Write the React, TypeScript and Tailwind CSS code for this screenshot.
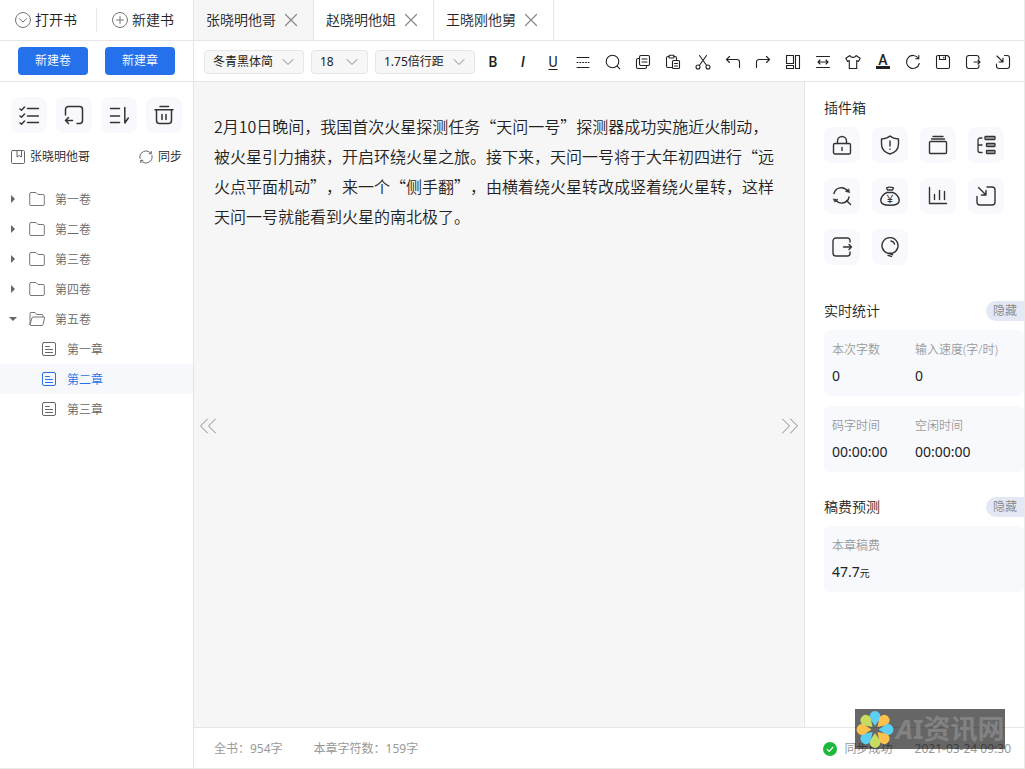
import type { ReactNode } from "react";
import clsx from "clsx";

type IconProps = { size?: number; stroke?: number; className?: string; children: ReactNode };

function Icon({ size = 16, stroke = 1.1, className, children }: IconProps) {
  return (
    <svg
      width={size}
      height={size}
      viewBox={`0 0 ${size} ${size}`}
      fill="none"
      stroke="currentColor"
      strokeWidth={stroke}
      strokeLinecap="round"
      strokeLinejoin="round"
      className={clsx("shrink-0", className)}
      aria-hidden="true"
    >
      {children}
    </svg>
  );
}

const TABS = ["张晓明他哥", "赵晓明他姐", "王晓刚他舅"];

const SELECTS = [
  { label: "字体", value: "冬青黑体简", width: "w-[100px]" },
  { label: "字号", value: "18", width: "w-[57px]" },
  { label: "行距", value: "1.75倍行距", width: "w-[100px]" },
];

const TOOLS: { label: string; icon: ReactNode }[] = [
  { label: "加粗", icon: <span className="font-[Roboto,sans-serif] text-sm font-medium">B</span> },
  { label: "斜体", icon: <span className="font-[Roboto,sans-serif] text-sm font-medium italic">I</span> },
  { label: "下划线", icon: <span className="font-[Roboto,sans-serif] text-sm font-normal underline underline-offset-2">U</span> },
  { label: "分隔线", icon: <Icon><path d="M2 3.5h12M2 13.5h12" /><path d="M2 8.5h12" strokeDasharray="1 1.8" /></Icon> },
  { label: "查找", icon: <Icon><circle cx="7.5" cy="7.5" r="6.3" /><path d="M12.2 12.2l2.6 2.6" /></Icon> },
  {
    label: "复制",
    icon: <Icon><rect x="4.5" y="1.5" width="10" height="10" rx="1.5" /><path d="M4.5 4.5H3A1.5 1.5 0 0 0 1.5 6v7A1.5 1.5 0 0 0 3 14.5h7a1.5 1.5 0 0 0 1.5-1.5v-1.5M7 5h5M7 8h5" /></Icon>,
  },
  {
    label: "粘贴",
    icon: <Icon><path d="M4 2.5H3A1.5 1.5 0 0 0 1.5 4v8A1.5 1.5 0 0 0 3 13.5h4.5M9 2.5h1A1.5 1.5 0 0 1 11.5 4v2.5" /><rect x="4" y="1.2" width="5" height="2.8" rx=".8" /><rect x="7.5" y="6.5" width="7" height="8" rx="1" /><path d="M9.5 9.5h3M9.5 12h3" /></Icon>,
  },
  {
    label: "剪切",
    icon: <Icon><circle cx="3" cy="13" r="2" /><circle cx="13" cy="13" r="2" /><path d="M4.5 1.5l7.2 10M11.5 1.5l-7.2 10" /></Icon>,
  },
  { label: "撤销", icon: <Icon><path d="M4.5 2.5l-3 3 3 3M1.5 5.5H12A2.5 2.5 0 0 1 14.5 8v5.5" /></Icon> },
  { label: "重做", icon: <Icon><path d="M11.5 2.5l3 3-3 3M14.5 5.5H4A2.5 2.5 0 0 0 1.5 8v5.5" /></Icon> },
  {
    label: "排版",
    icon: <Icon><rect x="1.5" y="1.5" width="7" height="8" /><rect x="1.5" y="11.5" width="7" height="3" /><rect x="10.5" y="1.5" width="4" height="13" /></Icon>,
  },
  { label: "页宽", icon: <Icon><path d="M1.5 2.5h13M1.5 13.5h13M3 8h10M5 6L3 8l2 2M11 6l2 2-2 2" /></Icon> },
  {
    label: "皮肤",
    icon: <Icon><path d="M5 1.5L.8 4.2l1.8 3.3 1.7-.9v7.9h7.4V6.6l1.7.9 1.8-3.3L11 1.5C10.5 4 5.5 4 5 1.5z" /></Icon>,
  },
  {
    label: "字体颜色",
    icon: (
      <span className="flex h-[15px] w-[14px] items-center justify-center border-b-3 border-[#222] font-[Roboto,sans-serif] text-sm leading-3 font-medium">A</span>
    ),
  },
  { label: "刷新", icon: <Icon><path d="M14.3 9.5a6.5 6.5 0 1 1-.9-5.2M13.8 1.5v3.2h-3.2" /></Icon> },
  {
    label: "保存",
    icon: <Icon><path d="M3 1.5h9.5l2 2V13a1.5 1.5 0 0 1-1.5 1.5H3A1.5 1.5 0 0 1 1.5 13V3A1.5 1.5 0 0 1 3 1.5zM4.5 1.5v4h6v-4M8.8 3v1" /></Icon>,
  },
  {
    label: "导出",
    icon: <Icon><path d="M14 5V4a2.5 2.5 0 0 0-2.5-2.5H4A2.5 2.5 0 0 0 1.5 4v8A2.5 2.5 0 0 0 4 14.5h7.5A2.5 2.5 0 0 0 14 12v-1M9 8h6M13 6l2 2-2 2" /></Icon>,
  },
  {
    label: "导入",
    icon: <Icon><path d="M9.5 1.5H12A2.5 2.5 0 0 1 14.5 4v8a2.5 2.5 0 0 1-2.5 2.5H4A2.5 2.5 0 0 1 1.5 12v-2M2 2l6 6M8 4v4H4" /></Icon>,
  },
];

const BOOK_ACTIONS: { label: string; icon: ReactNode }[] = [
  {
    label: "批量选择",
    icon: <Icon size={20} stroke={1.5}><path d="M8.5 3.5h11M8.5 11h11M8.5 17.5h11M1 4l1.5 1.2L5.5 2M1 11l1.5 1.2L5.5 9M1 18l1.5 1.2L5.5 16" /></Icon>,
  },
  {
    label: "移动",
    icon: <Icon size={20} stroke={1.5}><path d="M1.5 10V4.5a3 3 0 0 1 3-3h11a3 3 0 0 1 3 3v11a3 3 0 0 1-3 3H13M8.5 15.5h-7M4.5 12.5l-3 3 3 3" /></Icon>,
  },
  {
    label: "排序",
    icon: <Icon size={20} stroke={1.5}><path d="M1.5 3.5h9M1.5 11h9M1.5 17.5h9M15.8 2.5V18l3.5-5" /></Icon>,
  },
  {
    label: "回收站",
    icon: <Icon size={20} stroke={1.5}><path d="M6 1.5h8.5M1 4.8h18M2.5 5v10.5a3 3 0 0 0 3 3h9a3 3 0 0 0 3-3V5M8 9.5v5M12 9.5v5" /></Icon>,
  },
];

const PLUGINS: { label: string; icon: ReactNode }[] = [
  {
    label: "锁定",
    icon: <Icon size={20} stroke={1.4}><rect x="1.5" y="8.5" width="17" height="10.5" rx="1.5" /><path d="M5.5 8.5V6a4.5 4.5 0 0 1 9 0v2.5M10 12.5v3" /></Icon>,
  },
  {
    label: "敏感词",
    icon: <Icon size={20} stroke={1.4}><path d="M10 1c2 1.8 5 2.8 8.5 3v5c0 5-3.5 8.5-8.5 10C5 17.5 1.5 14 1.5 9V4C5 3.8 8 2.8 10 1zM10 6v5M10 14v.3" /></Icon>,
  },
  {
    label: "素材箱",
    icon: <Icon size={20} stroke={1.4}><rect x="1.5" y="6.5" width="17" height="12" rx="1" /><path d="M3.5 4h13M5 1.5h10" /></Icon>,
  },
  {
    label: "大纲",
    icon: (
      <Icon size={20} stroke={1.3}>
        <path d="M6 3H4a2 2 0 0 0-2 2v10.5a2 2 0 0 0 2 2h2M2 10h4" />
        <g fill="#aaaab0">
          <rect x="9" y="1.5" width="10" height="3" rx=".5" />
          <rect x="10.5" y="8.5" width="8.5" height="3" rx=".5" />
          <rect x="10.5" y="15.5" width="8.5" height="3" rx=".5" />
        </g>
      </Icon>
    ),
  },
  {
    label: "查找替换",
    icon: <Icon size={20} stroke={1.4}><path d="M2 7.5A7.5 7.5 0 0 1 15.5 5M17 11a7.5 7.5 0 0 1-13 3.5M14.5 14.5l4 4" /><path d="M17.5 6.5l-4-1 3-2.5zM1.5 13l4.5.5-3 2.5z" fill="currentColor" strokeWidth=".6" /></Icon>,
  },
  {
    label: "稿费",
    icon: (
      <Icon size={20} stroke={1.4}>
        <path d="M7.5 4l-1-2.2q3.5-1.3 7 0l-1 2.2zM7 6.5C4 7.5.8 11 .8 14.5.8 18 4 19.3 10 19.3s9.2-1.3 9.2-4.8c0-3.5-3.2-7-6.2-8z" />
        <text x="10" y="17" textAnchor="middle" fontSize="11" fontFamily="Noto Sans, sans-serif" fill="currentColor" strokeWidth=".3">¥</text>
      </Icon>
    ),
  },
  { label: "统计", icon: <Icon size={20} stroke={1.4}><path d="M1.5 1.5v16h17M6.5 8.5v5M11.5 4.5v9M16.5 5.5v8" /></Icon> },
  {
    label: "导入文稿",
    icon: <Icon size={20} stroke={1.4}><path d="M11 1h5a3 3 0 0 1 3 3v12a3 3 0 0 1-3 3H4a3 3 0 0 1-3-3v-5.5M2.5 1.5L10 9M10 4.5V9H5.5" /></Icon>,
  },
  {
    label: "导出文稿",
    icon: <Icon size={20} stroke={1.4}><path d="M18 5V3.5A2.5 2.5 0 0 0 15.5 1H4a3 3 0 0 0-3 3v12a3 3 0 0 0 3 3h11.5a2.5 2.5 0 0 0 2.5-2.5V15M11.5 10h8M17 7.5l2.5 2.5-2.5 2.5" /></Icon>,
  },
  {
    label: "灵感",
    icon: <Icon size={20} stroke={1.4}><path d="M7.5 16.2a8 8 0 1 1 5 0zM11 4c1.8.3 3 1.5 3.5 3M7.5 16.2l5 1.5M8 18.4l3.5 1" /></Icon>,
  },
];

const VOLUMES = ["第一卷", "第二卷", "第三卷", "第四卷", "第五卷"];
const CHAPTERS = ["第一章", "第二章", "第三章"];

const ARTICLE =
  "2月10日晚间，我国首次火星探测任务“天问一号”探测器成功实施近火制动，被火星引力捕获，开启环绕火星之旅。接下来，天问一号将于大年初四进行“远火点平面机动”，来一个“侧手翻”，由横着绕火星转改成竖着绕火星转，这样天问一号就能看到火星的南北极了。";

const PETALS = ["#5ccff2", "#fcc24f", "#5ccff2", "#fcc24f", "#c8dc62", "#5ccff2", "#fcc24f", "#c8dc62"];

function TileButton({ label, icon }: { label: string; icon: ReactNode }) {
  return (
    <button aria-label={label} className="flex size-9 items-center justify-center rounded-lg bg-[#f9f9fd] text-[#333]">
      {icon}
    </button>
  );
}

function Sidebar() {
  return (
    <aside className="flex w-[194px] shrink-0 flex-col border-r border-[#e4e4e4]">
      <div className="flex h-[41px] items-center border-b border-[#e6e6e6] text-sm text-[#222]">
        <button className="flex w-24 items-center gap-1 pl-[15px]">
          <Icon className="text-[#777]" stroke={1}><circle cx="8" cy="8" r="7.5" /><path d="M4.5 6.8L8 10l3.5-3.2" /></Icon>
          打开书
        </button>
        <span className="h-6 w-px bg-[#e8e8e8]" />
        <button className="flex items-center gap-1 pl-[15px]">
          <Icon className="text-[#777]" stroke={1}><circle cx="8" cy="8" r="7.5" /><path d="M4.5 8h7M8 4.5v7" /></Icon>
          新建书
        </button>
      </div>
      <div className="flex h-[41px] items-center gap-[17px] border-b border-[#e6e6e6] px-[18px] text-xs text-white">
        <button className="h-7 w-[70px] rounded bg-[#2571eb]">新建卷</button>
        <button className="h-7 w-[70px] rounded bg-[#2571eb]">新建章</button>
      </div>

      <div className="flex justify-between px-[11px] pt-[15px]">
        {BOOK_ACTIONS.map((a) => <TileButton key={a.label} {...a} />)}
      </div>
      <div className="mt-4 flex h-4 items-center justify-between px-[11px] text-xs text-[#222]">
        <span className="flex items-center gap-[5px]">
          <Icon size={14} stroke={1} className="text-[#666]"><rect x=".5" y=".5" width="13" height="13" rx="1" /><path d="M6 .5V7l2.2-1.5L10.5 7V.5" /></Icon>
          张晓明他哥
        </span>
        <button className="flex items-center gap-[5px]">
          <Icon size={14} stroke={1} className="text-[#666]"><path d="M1 8.5a6.2 6.2 0 0 1 11-5M13 5.5a6.2 6.2 0 0 1-11 5M12.3 1.5v2.2h-2.2M1.7 12.5v-2.2h2.2" /></Icon>
          同步
        </button>
      </div>

      <ul className="mt-[19px] text-xs text-[#666]">
        {VOLUMES.map((name, i) => {
          const open = i === VOLUMES.length - 1;
          return (
            <li key={name}>
              <button className="flex h-[30px] w-full items-center pl-[9px]" aria-expanded={open}>
                <svg width="8" height="8" viewBox="0 0 8 8" fill="#666" aria-hidden="true">
                  {open ? <path d="M0 2h8L4 6z" /> : <path d="M2 0v8l4-4z" />}
                </svg>
                <Icon stroke={1} className="mr-[10px] ml-3 text-[#777]">
                  {open ? (
                    <path d="M1 13V2.5a1 1 0 0 1 1-1h4l1.5 2H13a1 1 0 0 1 1 1V6M1 13.5L3 7a1 1 0 0 1 1-1h11a.6.6 0 0 1 .6.8L14 13.5a1 1 0 0 1-1 1H2a1 1 0 0 1-1-1z" />
                  ) : (
                    <path d="M2 1.5h5l2 2h5a1.3 1.3 0 0 1 1.3 1.3v8.4a1.3 1.3 0 0 1-1.3 1.3H2a1.3 1.3 0 0 1-1.3-1.3V2.8A1.3 1.3 0 0 1 2 1.5z" />
                  )}
                </Icon>
                <span className="pt-0.5">{name}</span>
              </button>
            </li>
          );
        })}
        {CHAPTERS.map((name, i) => (
          <li key={name}>
            <button className={clsx("flex h-[30px] w-full items-center gap-[11px] pl-[42px]", i === 1 && "bg-[#f6f8fc] text-[#2571eb]")}>
              <Icon size={14} stroke={1}><rect x=".5" y=".5" width="13" height="13" rx="1.5" /><path d="M3.5 4.5h4M3.5 7.5h7M3.5 10.5h7" /></Icon>
              <span className="pt-0.5">{name}</span>
            </button>
          </li>
        ))}
      </ul>
    </aside>
  );
}

function Toolbar() {
  return (
    <div className="flex h-[41px] items-center border-b border-[#e6e6e6] pt-px pl-[10px] text-[#222]">
      <div className="flex gap-[7px]">
        {SELECTS.map((s) => (
          <div key={s.label} className={clsx("relative shrink-0", s.width)}>
            <select aria-label={s.label} className="block h-6 w-full appearance-none rounded border border-[#e6e6e6] bg-[#f7f7f7] pl-2 text-xs font-normal">
              <option>{s.value}</option>
            </select>
            <Icon size={12} stroke={1} className="pointer-events-none absolute top-1.5 right-2.5 text-[#888]"><path d="M1 3.5l5 5 5-5" /></Icon>
          </div>
        ))}
      </div>
      <div className="ml-[3px] flex">
        {TOOLS.map((t) => (
          <button key={t.label} aria-label={t.label} className="flex h-6 w-[30px] items-center justify-center">
            {t.icon}
          </button>
        ))}
      </div>
    </div>
  );
}

function Stat({ label, value, unit }: { label: string; value: string; unit?: string }) {
  return (
    <div className="min-w-[83px]">
      <dt className="text-xs leading-4 whitespace-nowrap text-[#999]">{label}</dt>
      <dd className="mt-2 text-sm leading-5 font-normal text-[#222]">
        {value}
        {unit && <span className="text-[10px]">{unit}</span>}
      </dd>
    </div>
  );
}

function SectionHead({ title }: { title: string }) {
  return (
    <div className="flex h-5 items-center justify-between">
      <h2 className="text-sm text-[#222]">{title}</h2>
      <button className="h-5 rounded-l-full bg-[#e4e8f5] px-[7px] text-xs text-[#888]">隐藏</button>
    </div>
  );
}

function PluginPanel() {
  return (
    <aside className="w-[220px] shrink-0 border-l border-[#e6e6e6] pl-[19px]">
      <h2 className="mt-4 text-sm leading-5 text-[#222]">插件箱</h2>
      <div className="mt-[9px] grid w-[180px] grid-cols-4 gap-x-3 gap-y-[15px]">
        {PLUGINS.map((p) => <TileButton key={p.label} {...p} />)}
      </div>
      <section className="mt-9">
        <SectionHead title="实时统计" />
        <dl className="mt-[9px] flex h-[66px] rounded-md bg-[#f8f9fd] px-2 pt-3">
          <Stat label="本次字数" value="0" />
          <Stat label="输入速度(字/时)" value="0" />
        </dl>
        <dl className="mt-[10px] flex h-[66px] rounded-md bg-[#f8f9fd] px-2 pt-3">
          <Stat label="码字时间" value="00:00:00" />
          <Stat label="空闲时间" value="00:00:00" />
        </dl>
      </section>
      <section className="mt-[25px]">
        <SectionHead title="稿费预测" />
        <dl className="mt-[9px] flex h-[66px] rounded-md bg-[#f8f9fd] px-2 pt-3">
          <Stat label="本章稿费" value="47.7" unit="元" />
        </dl>
      </section>
    </aside>
  );
}

function Watermark() {
  return (
    <div className="pointer-events-none absolute right-[19px] bottom-[19px] flex h-10 w-[150px] items-center bg-black/60">
      <svg width="40" height="40" viewBox="0 0 40 40" className="shrink-0" aria-hidden="true">
        {PETALS.map((color, i) => (
          <path key={i} d="M20 17l-5-7.5a5.4 5.4 0 1 1 10 0z" fill={color} transform={`rotate(${i * 45} 20 20.5)`} />
        ))}
      </svg>
      <span className="pl-px text-[27px] leading-8 font-bold whitespace-nowrap text-[#828282]"><i>A</i>I资讯网</span>
    </div>
  );
}

export default function App() {
  return (
    <div className="relative flex h-screen min-h-[620px] overflow-hidden border-r border-b border-[#e8e8e8] bg-white font-['Noto_Sans','Noto_Sans_CJK_SC',sans-serif] font-[350]">
      <Sidebar />
      <div className="flex min-w-0 flex-1 flex-col">
        <nav className="flex h-[41px] border-b border-[#e6e6e6]">
          {TABS.map((tab, i) => (
            <div key={tab} className={clsx("flex w-[120px] items-center gap-2 border-r border-[#e6e6e6] pl-3 text-sm text-[#222]", i === 0 && "bg-[#f6f6f6]")}>
              <button>{tab}</button>
              <button aria-label={`关闭${tab}`} className="text-[#888]">
                <Icon size={14} stroke={1.2}><path d="M1.5 1.5l11 11M12.5 1.5l-11 11" /></Icon>
              </button>
            </div>
          ))}
        </nav>
        <Toolbar />
        <div className="flex min-h-0 flex-1">
          <main className="relative min-w-0 flex-1 bg-[#f6f6f6] px-5 pt-[29px]">
            <p lang="zh-CN" className="font-['Noto_Sans_CJK_SC',sans-serif] text-base leading-[30px] text-[#222] [text-spacing-trim:space-all]">
              {ARTICLE}
            </p>
            <button aria-label="收起目录" className="absolute top-[336px] left-1.5 text-[#888]">
              <Icon stroke={1}><path d="M7.5 1l-7 7 7 7M15.5 1l-7 7 7 7" /></Icon>
            </button>
            <button aria-label="收起插件箱" className="absolute top-[336px] right-1.5 text-[#888]">
              <Icon stroke={1}><path d="M.5 1l7 7-7 7M8.5 1l7 7-7 7" /></Icon>
            </button>
          </main>
          <PluginPanel />
        </div>
        <footer className="flex h-[41px] items-center border-t border-[#e6e6e6] pt-0.5 pr-[13px] pl-5 text-xs font-normal text-[#999]">
          <span>全书：954字</span>
          <span className="ml-[31px]">本章字符数：159字</span>
          <span className="ml-auto flex items-center gap-2">
            <svg width="14" height="14" viewBox="0 0 14 14" fill="none" aria-hidden="true">
              <circle cx="7" cy="7" r="7" fill="#1cb83c" />
              <path d="M4 7.2l2.2 2.2L10.2 5" stroke="#fff" strokeWidth="1.2" />
            </svg>
            同步成功
          </span>
          <time className="ml-[22px]">2021-03-24 09:30</time>
        </footer>
      </div>
      <Watermark />
    </div>
  );
}
